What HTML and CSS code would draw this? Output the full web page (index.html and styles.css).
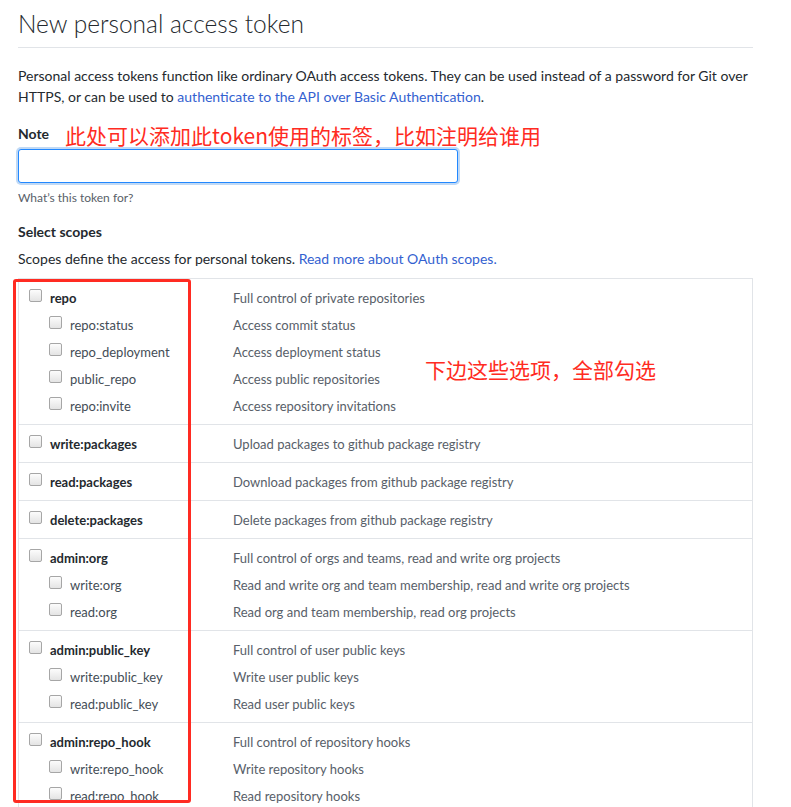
FILE: index.html
```html
<!DOCTYPE html>
<html>
<head>
<meta charset="utf-8">
<link rel="stylesheet" href="styles.css">
</head>
<body>
<div class="page">
  <div class="header"><h1>New personal access token</h1></div>
  <p class="intro">Personal access tokens function like ordinary OAuth access tokens. They can be used instead of a password for Git over HTTPS, or can be used to <a href="#">authenticate to the API over Basic Authentication</a>.</p>

  <div class="note-row"><label class="note-label">Note</label><span class="annot annot-note">此处可以添加此token使用的标签，比如注明给谁用</span></div>
  <input class="note-input" type="text">
  <div class="hint">What’s this token for?</div>

  <div class="scopes-title">Select scopes</div>
  <p class="scopes-desc">Scopes define the access for personal tokens. <a href="#">Read more about OAuth scopes.</a></p>

  <div class="scopes">
    <div class="group">
      <div class="row top"><span class="lab"><span class="cb"></span>repo</span><span class="desc">Full control of private repositories</span></div>
      <div class="row sub"><span class="lab"><span class="cb"></span>repo:status</span><span class="desc">Access commit status</span></div>
      <div class="row sub"><span class="lab"><span class="cb"></span>repo_deployment</span><span class="desc">Access deployment status</span></div>
      <div class="row sub"><span class="lab"><span class="cb"></span>public_repo</span><span class="desc">Access public repositories</span></div>
      <div class="row sub"><span class="lab"><span class="cb"></span>repo:invite</span><span class="desc">Access repository invitations</span></div>
    </div>
    <div class="group">
      <div class="row top"><span class="lab"><span class="cb"></span>write:packages</span><span class="desc">Upload packages to github package registry</span></div>
    </div>
    <div class="group">
      <div class="row top"><span class="lab"><span class="cb"></span>read:packages</span><span class="desc">Download packages from github package registry</span></div>
    </div>
    <div class="group">
      <div class="row top"><span class="lab"><span class="cb"></span>delete:packages</span><span class="desc">Delete packages from github package registry</span></div>
    </div>
    <div class="group">
      <div class="row top"><span class="lab"><span class="cb"></span>admin:org</span><span class="desc">Full control of orgs and teams, read and write org projects</span></div>
      <div class="row sub"><span class="lab"><span class="cb"></span>write:org</span><span class="desc">Read and write org and team membership, read and write org projects</span></div>
      <div class="row sub"><span class="lab"><span class="cb"></span>read:org</span><span class="desc">Read org and team membership, read org projects</span></div>
    </div>
    <div class="group">
      <div class="row top"><span class="lab"><span class="cb"></span>admin:public_key</span><span class="desc">Full control of user public keys</span></div>
      <div class="row sub"><span class="lab"><span class="cb"></span>write:public_key</span><span class="desc">Write user public keys</span></div>
      <div class="row sub"><span class="lab"><span class="cb"></span>read:public_key</span><span class="desc">Read user public keys</span></div>
    </div>
    <div class="group">
      <div class="row top"><span class="lab"><span class="cb"></span>admin:repo_hook</span><span class="desc">Full control of repository hooks</span></div>
      <div class="row sub"><span class="lab"><span class="cb"></span>write:repo_hook</span><span class="desc">Write repository hooks</span></div>
      <div class="row sub"><span class="lab"><span class="cb"></span>read:repo_hook</span><span class="desc">Read repository hooks</span></div>
    </div>
    <div class="redbox"></div>
    <span class="annot annot-all">下边这些选项，全部勾选</span>
  </div>
</div>
</body>
</html>
```

FILE: styles.css
```css
html, body {
  margin: 0;
  padding: 0;
  background: #fff;
}
body {
  font-family: "Lato", "Noto Sans", "Liberation Sans", sans-serif;
  font-size: 14px;
  color: #24292e;
}
.page {
  width: 735px;
  margin-left: 18px;
}
.header {
  padding-top: 9px;
  padding-bottom: 8px;
  border-bottom: 1px solid #e1e4e8;
}
h1 {
  margin: 0;
  font-size: 24.5px;
  font-weight: 300;
  line-height: 30px;
}
.intro {
  margin: 17px 0 0;
  line-height: 21px;
  color: #24292e;
}
a {
  color: #3361d0;
  text-decoration: none;
}
.note-row {
  margin-top: 16px;
  height: 21px;
  display: flex;
  align-items: center;
}
.note-label {
  font-weight: 700;
  line-height: 21px;
}
.annot {
  font-family: "Noto Sans CJK SC", sans-serif;
  color: #ff2b22;
  font-size: 21px;
  line-height: 24px;
  white-space: nowrap;
}
.annot-note {
  margin-left: 16px;
  margin-top: 2px;
}
.note-input {
  display: block;
  box-sizing: border-box;
  margin: 5px 0 0;
  width: 440px;
  height: 34px;
  border: 1px solid #2188ff;
  border-radius: 3px;
  box-shadow: 0 0 0 2px rgba(3, 102, 214, 0.25);
  outline: none;
  padding: 6px 8px;
  font-size: 14px;
}
.hint {
  margin-top: 6px;
  font-size: 12px;
  line-height: 18px;
  color: #586069;
}
.scopes-title {
  margin-top: 14px;
  font-weight: 700;
  line-height: 21px;
}
.scopes-desc {
  margin: 6px 0 0;
  line-height: 21px;
}
.scopes {
  position: relative;
  margin-top: 9px;
  border: 1px solid #e1e4e8;
  border-bottom: 0;
  font-size: 13px;
}
.group {
  padding: 5px 0 5px;
  border-bottom: 1px solid #e1e4e8;
}
.row {
  display: flex;
  align-items: center;
  height: 27px;
}
.lab {
  display: flex;
  align-items: center;
  width: 214px;
  padding-left: 10px;
  box-sizing: border-box;
  color: #24292e;
}
.top .lab {
  font-weight: 700;
}
.sub .lab {
  padding-left: 30px;
  color: #444d56;
}
.cb {
  display: inline-block;
  box-sizing: border-box;
  width: 13px;
  height: 13px;
  margin-right: 8px;
  margin-top: -4px;
  border: 1px solid #a6a6a6;
  border-radius: 2px;
  background: linear-gradient(#fcfcfc, #e4e4e4);
}
.desc {
  color: #586069;
}
.redbox {
  position: absolute;
  left: -6px;
  top: 0;
  width: 178px;
  height: 524px;
  box-sizing: border-box;
  border: 3px solid #ff2b22;
  border-radius: 3px;
  pointer-events: none;
}
.annot-all {
  position: absolute;
  left: 406px;
  top: 78px;
}
```
